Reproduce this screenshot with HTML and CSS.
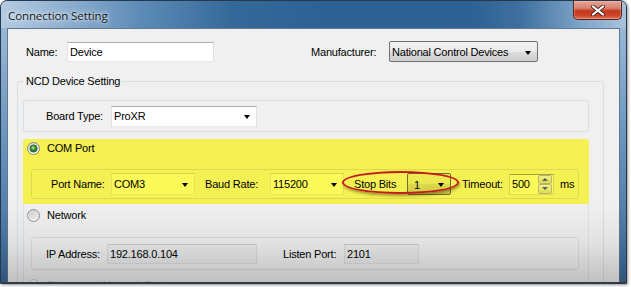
FILE: index.html
```html
<!DOCTYPE html>
<html>
<head>
    <title>Connection Setting</title>
    <meta charset="utf-8">
    <link rel="stylesheet" href="styles.css">
</head>

<body>
    <div class="window">
        <div class="titlebar">
            <span class="title">Connection Setting</span>
            <span class="close-btn">
                <svg width="14" height="11" viewBox="0 0 14 11">
                    <path d="M2 1.5 L12 9.5 M12 1.5 L2 9.5" stroke="#4a2a24" stroke-width="4" stroke-linecap="round"/>
                    <path d="M2 1.5 L12 9.5 M12 1.5 L2 9.5" stroke="#ffffff" stroke-width="2.2" stroke-linecap="round"/>
                </svg>
            </span>
        </div>

        <div class="client">
            <div class="top-row">
                <span class="lbl lbl-name">Name:</span>
                <div class="textbox name-box">Device</div>
                <span class="lbl lbl-manu">Manufacturer:</span>
                <div class="combo list manu-box">National Control Devices<span class="arrow"></span></div>
            </div>

            <fieldset class="group">
                <legend>NCD Device Setting</legend>

                <div class="panel board-panel">
                    <span class="lbl lbl-board">Board Type:</span>
                    <div class="combo board-box">ProXR<span class="arrow"></span></div>
                </div>

                <div class="ports">
                    <div class="com-section">
                        <div class="radio-row">
                            <svg class="radio" width="13" height="13" viewBox="0 0 13 13">
                                <defs>
                                    <linearGradient id="rb" x1="0" y1="0" x2="0" y2="1">
                                        <stop offset="0" stop-color="#d8d8d8"/>
                                        <stop offset="1" stop-color="#fbfbfb"/>
                                    </linearGradient>
                                    <radialGradient id="rg" cx="0.45" cy="0.4" r="0.6">
                                        <stop offset="0" stop-color="#b6ecab"/>
                                        <stop offset="0.5" stop-color="#3f9a3c"/>
                                        <stop offset="1" stop-color="#175e18"/>
                                    </radialGradient>
                                </defs>
                                <circle cx="6.5" cy="6.5" r="6" fill="url(#rb)" stroke="#8a8a6a"/>
                                <circle cx="6.5" cy="6.5" r="3.6" fill="url(#rg)" stroke="#2e5a28" stroke-width="0.8"/>
                            </svg>
                            <span>COM Port</span>
                        </div>
                        <div class="subpanel com-sub">
                            <span class="lbl lbl-port">Port Name:</span>
                            <div class="combo yellow port-box">COM3<span class="arrow"></span></div>
                            <span class="lbl lbl-baud">Baud Rate:</span>
                            <div class="combo yellow baud-box">115200<span class="arrow"></span></div>
                            <span class="lbl lbl-stop">Stop Bits</span>
                            <div class="combo list yellow-list stop-box">1<span class="arrow"></span></div>
                            <span class="lbl lbl-timeout">Timeout:</span>
                            <div class="spin">
                                <span class="spin-val">500</span>
                                <span class="spin-btns">
                                    <span class="spin-btn"><span class="tri-up"></span></span>
                                    <span class="spin-btn"><span class="tri-down"></span></span>
                                </span>
                            </div>
                            <span class="lbl lbl-ms">ms</span>
                            <span class="ring"></span>
                        </div>
                    </div>

                    <div class="net-section">
                        <div class="radio-row">
                            <svg class="radio" width="13" height="13" viewBox="0 0 13 13">
                                <defs>
                                    <linearGradient id="rb2" x1="0" y1="0" x2="0" y2="1">
                                        <stop offset="0" stop-color="#d4d4d4"/>
                                        <stop offset="1" stop-color="#fdfdfd"/>
                                    </linearGradient>
                                    <linearGradient id="ri2" x1="0" y1="0" x2="1" y2="1">
                                        <stop offset="0" stop-color="#cfcfcf"/>
                                        <stop offset="1" stop-color="#f6f6f6"/>
                                    </linearGradient>
                                </defs>
                                <circle cx="6.5" cy="6.5" r="6" fill="url(#rb2)" stroke="#8f8f8f"/>
                                <circle cx="6.5" cy="6.5" r="4" fill="url(#ri2)"/>
                            </svg>
                            <span>Network</span>
                        </div>
                        <div class="subpanel net-sub">
                            <span class="lbl lbl-ip">IP Address:</span>
                            <div class="textbox grey ip-box">192.168.0.104</div>
                            <span class="lbl lbl-listen">Listen Port:</span>
                            <div class="textbox grey listen-box">2101</div>
                        </div>
                        <div class="radio-row faded">
                            <svg class="radio" width="13" height="13" viewBox="0 0 13 13">
                                <circle cx="6.5" cy="6.5" r="6" fill="#f4f4f4" stroke="#c8c8c8"/>
                            </svg>
                            <span>Discovered Network Ports</span>
                        </div>
                    </div>
                </div>
            </fieldset>
        </div>

        <div class="fade"></div>
    </div>
</body>

</html>
```

FILE: styles.css
```css
* {
    box-sizing: border-box;
}

body {
    margin: 0;
    width: 631px;
    height: 287px;
    overflow: hidden;
    background-color: #fff;
    font-family: 'Liberation Sans', Arial, sans-serif;
    font-size: 11px;
    letter-spacing: -0.2px;
    color: #000;
}

.window {
    position: relative;
    width: 627px;
    height: 284px;
    padding: 0 6px;
    border: 1px solid #27384c;
    border-radius: 7px 7px 0 0;
    background: linear-gradient(180deg, #a3c0db 0%, #6e97bf 45%, #3b6a9a 100%);
    box-shadow: 1px 1px 3px rgba(0, 0, 0, 0.45);
    display: flex;
    flex-direction: column;
    overflow: hidden;
}

.titlebar {
    height: 27px;
    margin: 0 -6px;
    padding-left: 7px;
    display: flex;
    align-items: flex-start;
    justify-content: space-between;
    border-radius: 6px 6px 0 0;
    background: linear-gradient(90deg, #b3cbe2 0px, #97b6d4 50px, #5d8bb7 140px, #356999 230px, #2c6195 330px, #2d6193 470px, #3f709f 520px, #7ea5ca 580px, #a7c3de 625px);
}

.title {
    margin-top: 7px;
    font-family: 'Open Sans', sans-serif;
    font-size: 11.5px;
    letter-spacing: -0.1px;
    color: #141414;
    text-shadow: 0 0 6px rgba(255, 255, 255, 0.9), 0 0 3px rgba(255, 255, 255, 0.8);
}

.close-btn {
    width: 49px;
    height: 19px;
    margin-right: 4px;
    display: flex;
    align-items: center;
    justify-content: center;
    border: 1px solid #5b231a;
    border-top: none;
    border-radius: 0 0 5px 5px;
    background: linear-gradient(180deg, #e5a899 0%, #d8806c 40%, #c2391f 55%, #cc4427 80%, #e0775a 100%);
    box-shadow: inset 0 0 0 1px rgba(255, 200, 190, 0.35);
}

.client {
    flex: 1;
    border: 1px solid #5e7896;
    border-bottom: none;
    background-color: #f0f0f0;
    overflow: hidden;
}

.lbl {
    white-space: nowrap;
}

/* top row */
.top-row {
    display: flex;
    align-items: center;
    height: 21px;
    margin-top: 12px;
    padding-left: 18px;
}

.lbl-name {
    width: 41px;
}

.name-box {
    width: 147px;
    height: 20px;
}

.lbl-manu {
    width: 78px;
    margin-left: 97px;
}

.manu-box {
    width: 149px;
    height: 21px;
    padding-left: 4px;
}

/* controls */
.textbox,
.combo {
    position: relative;
    display: flex;
    align-items: center;
    padding-left: 2px;
    background-color: #fff;
    border: 1px solid;
    border-color: #abadb3 #dbdfe6 #e3e9ef #e2e3ea;
    white-space: nowrap;
}

.textbox.grey {
    background-color: #ebebeb;
    border-color: #c9cbcf #d9dbdf #dde0e3 #d9dbdf;
}

.combo.list {
    border: 1px solid #707070;
    border-radius: 2px;
    background: linear-gradient(180deg, #f2f2f2 0%, #ebebeb 50%, #dddddd 51%, #cfcfcf 100%);
}

.combo.yellow {
    background-color: #fcfa58;
    border-color: #d8d54c #e6e35a #ecea5c #e6e35a;
}

.combo.yellow-list {
    border-color: #6f6c35;
    background: linear-gradient(180deg, #efec52 0%, #e9e650 50%, #dcd94b 51%, #ceca46 100%);
}

.arrow {
    position: absolute;
    right: 6px;
    top: 50%;
    margin-top: -1px;
    width: 0;
    height: 0;
    border-top: 4px solid #000;
    border-left: 3.5px solid transparent;
    border-right: 3.5px solid transparent;
}

/* group */
.group {
    width: 587px;
    height: 260px;
    margin: 13px 0 0 9px;
    padding: 0;
    border: 1px solid #d5dfe5;
    border-radius: 3px;
}

.group legend {
    margin-left: 6px;
    padding: 0 2px;
    line-height: 13px;
}

.panel {
    width: 566px;
    border: 1px solid #d5dfe5;
    border-radius: 3px;
}

.board-panel {
    display: flex;
    align-items: center;
    height: 32px;
    margin: 12px 0 0 5px;
    padding-left: 22px;
}

.lbl-board {
    width: 65px;
}

.board-box {
    width: 146px;
    height: 21px;
}

/* ports */
.ports {
    width: 566px;
    height: 200px;
    margin: 7px 0 0 5px;
    border: 1px solid #dde4ea;
    border-radius: 3px;
}

.com-section {
    height: 65px;
    margin: -1px -1px 0 -1px;
    padding: 1px 4px 0 4px;
    background-color: #f5f152;
    border-radius: 3px 3px 0 0;
}

.radio-row {
    display: flex;
    align-items: center;
    height: 16px;
}

.radio {
    margin-right: 7px;
}

.subpanel {
    position: relative;
    display: flex;
    align-items: center;
    width: 548px;
    margin-left: 4px;
    border: 1px solid #ddd94c;
    border-radius: 3px;
}

.com-sub {
    height: 30px;
    margin-top: 13px;
    padding-left: 19px;
}

.lbl-port {
    width: 60px;
}

.port-box {
    width: 84px;
    height: 22px;
}

.lbl-baud {
    width: 65px;
    margin-left: 10px;
}

.baud-box {
    width: 74px;
    height: 22px;
}

.lbl-stop {
    width: 53px;
    margin-left: 10px;
}

.stop-box {
    width: 44px;
    height: 22px;
    padding-left: 6px;
    padding-top: 2px;
}

.lbl-timeout {
    width: 47px;
    margin-left: 11px;
}

.spin {
    display: flex;
    align-items: center;
    justify-content: space-between;
    width: 45px;
    height: 21px;
    padding-left: 2px;
    background-color: #fcfa58;
    border: 1px solid;
    border-color: #a3a13f #d6d34c #dedb50 #d6d34c;
}

.spin-btns {
    display: flex;
    flex-direction: column;
    height: 19px;
    margin-right: 1px;
}

.spin-btn {
    display: flex;
    align-items: center;
    justify-content: center;
    width: 14px;
    height: 9.5px;
    border: 1px solid #b9b66a;
    border-radius: 2px;
    background: linear-gradient(180deg, #f4f18a, #dedb55);
}

.tri-up,
.tri-down {
    width: 0;
    height: 0;
    border-left: 3px solid transparent;
    border-right: 3px solid transparent;
}

.tri-up {
    border-bottom: 3px solid #55634e;
}

.tri-down {
    border-top: 3px solid #55634e;
}

.lbl-ms {
    margin-left: 6px;
}

.ring {
    position: absolute;
    left: 310px;
    top: 1px;
    width: 117px;
    height: 23px;
    border: 2px solid #c41a1e;
    border-radius: 50%;
    box-shadow: 1px 2px 3px rgba(60, 40, 0, 0.45);
}

.net-section {
    padding: 3px 3px 0 3px;
}

.net-sub {
    height: 33px;
    margin-top: 14px;
    padding-left: 14px;
    border-color: #d5dfe5;
}

.lbl-ip {
    width: 61px;
}

.ip-box {
    width: 150px;
    height: 20px;
}

.lbl-listen {
    width: 61px;
    margin-left: 26px;
}

.listen-box {
    width: 75px;
    height: 20px;
}

.faded {
    margin-top: 7px;
    color: #c6c6c6;
}

/* screenshot fade at the bottom */
.fade {
    position: absolute;
    left: 0;
    right: 0;
    bottom: 0;
    height: 80px;
    background: linear-gradient(180deg, rgba(0, 0, 0, 0) 0%, rgba(0, 0, 0, 0.06) 50%, rgba(0, 0, 0, 0.2) 100%);
    border-bottom: 1px solid #3a3a3a;
    pointer-events: none;
}
```
